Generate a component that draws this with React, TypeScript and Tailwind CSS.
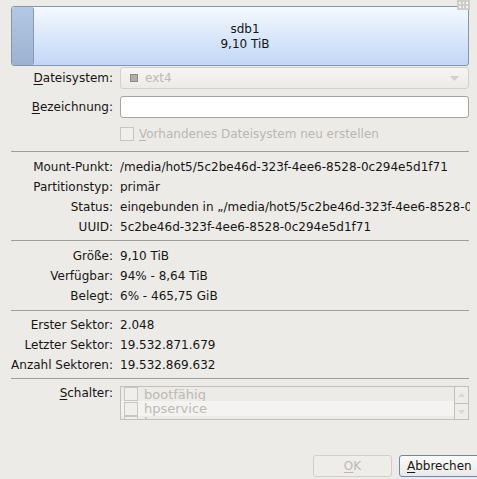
import type { ReactNode } from "react";

const font = { fontFamily: '"DejaVu Sans", Verdana, sans-serif' };

function Mnemonic({ ch, rest, disabled }: { ch: string; rest: string; disabled?: boolean }) {
  return (
    <span>
      <span className={`underline underline-offset-2 ${disabled ? "decoration-[#b9b6b1]" : ""}`}>{ch}</span>
      {rest}
    </span>
  );
}

function Row({ label, value }: { label: string; value: ReactNode }) {
  return (
    <div className="flex h-[20px] items-center">
      <div className="w-[113px] shrink-0 text-right">{label}</div>
      <div className="ml-[7px] w-[350px] overflow-hidden whitespace-nowrap">{value}</div>
    </div>
  );
}

function Separator({ className = "" }: { className?: string }) {
  return <div className={`ml-[11px] w-[458px] h-px bg-[#a19e99] ${className}`} />;
}

function Check({ className = "" }: { className?: string }) {
  return <div className={`w-[14px] h-[14px] shrink-0 border border-[#c9c6c1] bg-[#f1efec] ${className}`} />;
}

export default function App() {
  const uuid = "5c2be46d-323f-4ee6-8528-0c294e5d1f71";

  return (
    <div
      className="relative w-[477px] h-[479px] overflow-hidden bg-[#edebe7] text-[12px] leading-none text-[#151515]"
      style={font}
    >
      {/* resize grip corner */}
      <div className="absolute right-[7px] top-0 w-[13px] h-[10px] bg-[#cfcdca] grid grid-cols-3 gap-[2px] p-[2px]">
        {Array.from({ length: 6 }).map((_, i) => (
          <div key={i} className="bg-[#f4f3f1]" />
        ))}
      </div>

      {/* partition bar */}
      <div className="ml-[11px] mt-[6px] w-[458px] h-[60px] flex rounded-[3px] border border-[#8595ad] overflow-hidden bg-gradient-to-b from-[#f4f9ff] to-[#c2d7f6]">
        <div className="w-[22px] h-full rounded-[3px] border-r border-[#8a9ab3] bg-gradient-to-b from-[#b3c8e4] to-[#9db2d0]" />
        <div className="flex-1 flex flex-col items-center justify-center gap-[3px] pr-[12px]">
          <span>sdb1</span>
          <span>9,10 TiB</span>
        </div>
      </div>

      {/* Dateisystem */}
      <div className="flex items-center mt-px h-[22px]">
        <div className="w-[113px] shrink-0 text-right">
          <Mnemonic ch="D" rest="ateisystem:" />
        </div>
        <div className="ml-[7px] w-[349px] h-[22px] flex items-center rounded-[3px] border border-[#d3d0cb] bg-gradient-to-b from-[#f6f5f3] to-[#ecebe8] px-[9px]">
          <div className="w-[8px] h-[8px] bg-[#b1aeaa] border border-[#8d8a86]" />
          <span className="ml-[7px] text-[#bcb9b4]">ext4</span>
          <svg className="ml-auto" width="9" height="5" viewBox="0 0 9 5">
            <path d="M0 0 L9 0 L4.5 5 Z" fill="#d3d0cc" />
          </svg>
        </div>
      </div>

      {/* Bezeichnung */}
      <div className="flex items-center mt-[7px] h-[22px]">
        <div className="w-[113px] shrink-0 text-right">
          <Mnemonic ch="B" rest="ezeichnung:" />
        </div>
        <div className="ml-[7px] w-[349px] h-[22px] rounded-[3px] border border-[#a6a39e] bg-white" />
      </div>

      {/* checkbox */}
      <div className="flex items-center mt-[9px] ml-[120px] h-[14px]">
        <Check />
        <span className="ml-[5px] text-[#bab7b2]">
          <Mnemonic ch="V" rest="orhandenes Dateisystem neu erstellen" disabled />
        </span>
      </div>

      <Separator className="mt-[10px]" />

      <div className="mt-[5px]">
        <Row label="Mount-Punkt:" value={`/media/hot5/${uuid}`} />
        <Row label="Partitionstyp:" value="primär" />
        <Row label="Status:" value={`eingebunden in „/media/hot5/${uuid}“`} />
        <Row label="UUID:" value={uuid} />
      </div>

      <Separator className="mt-[3px]" />

      <div className="mt-[5px]">
        <Row label="Größe:" value="9,10 TiB" />
        <Row label="Verfügbar:" value="94% - 8,64 TiB" />
        <Row label="Belegt:" value="6% - 465,75 GiB" />
      </div>

      <Separator className="mt-[4px]" />

      <div className="mt-[4px]">
        <Row label="Erster Sektor:" value="2.048" />
        <Row label="Letzter Sektor:" value="19.532.871.679" />
        <Row label="Anzahl Sektoren:" value="19.532.869.632" />
      </div>

      <Separator className="mt-[3px]" />

      {/* Schalter */}
      <div className="flex items-start mt-[7px]">
        <div className="w-[113px] shrink-0 text-right h-[12px] mt-[1px]">
          <Mnemonic ch="S" rest="chalter:" />
        </div>
        <div className="ml-[7px] w-[349px] h-[34px] flex border border-[#c3c0bb] bg-[#edebe7]">
          <div className="flex-1 flex flex-col overflow-hidden text-[#bcb9b4]">
            <div className="h-[14px] flex items-center shrink-0">
              <Check className="ml-[3px]" />
              <span className="ml-[6px] text-[13px]">bootfähig</span>
            </div>
            <div className="h-[15px] flex items-center shrink-0 bg-[#f4f3f1]">
              <Check className="ml-[3px]" />
              <span className="ml-[6px] text-[13px]">hpservice</span>
            </div>
            <div className="h-[15px] flex items-start shrink-0">
              <Check className="ml-[3px]" />
              <span className="ml-[6px] text-[13px]">lvm</span>
            </div>
          </div>
          <div className="w-[14px] flex flex-col border-l border-[#c3c0bb]">
            <div className="h-[17px] flex items-center justify-center border-b border-[#c3c0bb] bg-[#efedea]">
              <svg width="7" height="4" viewBox="0 0 7 4">
                <path d="M0 4 L3.5 0 L7 4 Z" fill="#dad8d4" />
              </svg>
            </div>
            <div className="flex-1 flex items-center justify-center bg-[#efedea]">
              <svg width="7" height="4" viewBox="0 0 7 4">
                <path d="M0 0 L7 0 L3.5 4 Z" fill="#dad8d4" />
              </svg>
            </div>
          </div>
        </div>
      </div>

      {/* buttons */}
      <div className="flex mt-[35px] ml-[313px] gap-[7px]">
        <div className="w-[79px] h-[22px] shrink-0 flex items-center justify-center rounded-[3px] border border-[#d2cfca] bg-[#efedea] text-[#bcb9b4]">
          <Mnemonic ch="O" rest="K" disabled />
        </div>
        <div className="w-[90px] h-[22px] shrink-0 flex items-center pl-[7px] rounded-[3px] border border-[#6f87a0] bg-gradient-to-b from-[#fbfbfa] to-[#ebe9e6]">
          <Mnemonic ch="A" rest="bbrechen" />
        </div>
      </div>
    </div>
  );
}
